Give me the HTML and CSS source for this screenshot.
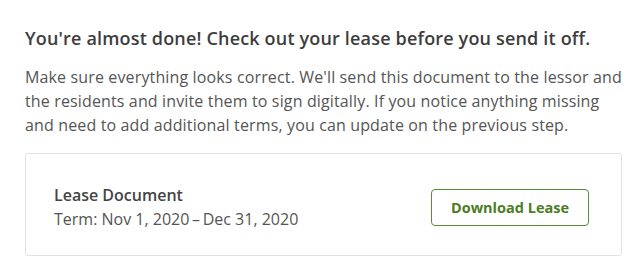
FILE: index.html
```html
<!DOCTYPE html>
<html lang="en">
<head>
<meta charset="utf-8">
<title>Review Lease</title>
<link rel="stylesheet" href="styles.css">
</head>
<body>
<main class="page">
  <h2 class="title">You're almost done! Check out your lease before you send it off.</h2>
  <p class="intro">Make sure everything looks correct. We'll send this document to the lessor and the residents and invite them to sign digitally. If you notice anything missing and need to add additional terms, you can update on the previous step.</p>
  <section class="card">
    <div class="doc">
      <div class="doc-name">Lease Document</div>
      <div class="doc-term">Term: Nov 1, 2020&thinsp;–&thinsp;Dec 31, 2020</div>
    </div>
    <button class="btn-outline" type="button">Download Lease</button>
  </section>
</main>
</body>
</html>
```

FILE: styles.css
```css
html, body {
  margin: 0;
  padding: 0;
  background: #ffffff;
}

body {
  font-family: "Open Sans", "Noto Sans", "Liberation Sans", sans-serif;
  color: #555555;
}

.page {
  width: 597px;
  padding: 26px 0 0 25px;
  box-sizing: content-box;
}

.title {
  margin: 0;
  font-size: 18px;
  line-height: 24px;
  font-weight: 600;
  letter-spacing: 0.17px;
  color: #3d3d3d;
}

.intro {
  margin: 15px 0 0;
  font-size: 16px;
  line-height: 24px;
  letter-spacing: 0.14px;
  color: #555555;
}

.card {
  margin-top: 16px;
  height: 103px;
  box-sizing: border-box;
  border: 1px solid #e2e2e2;
  border-radius: 3px;
  display: flex;
  align-items: center;
  justify-content: space-between;
  padding: 0 32px 0 28px;
}

.doc {
  margin-top: 4px;
}

.doc-name {
  font-size: 16px;
  line-height: 24px;
  font-weight: 600;
  color: #444444;
}

.doc-term {
  font-size: 16px;
  line-height: 24px;
  color: #555555;
}

.btn-outline {
  width: 158px;
  height: 37px;
  margin-top: 6px;
  border: 1px solid #5b8c39;
  border-radius: 4px;
  background: #ffffff;
  color: #4b7d24;
  font-family: inherit;
  font-size: 14.5px;
  font-weight: 700;
  padding: 0;
  cursor: pointer;
}
```
